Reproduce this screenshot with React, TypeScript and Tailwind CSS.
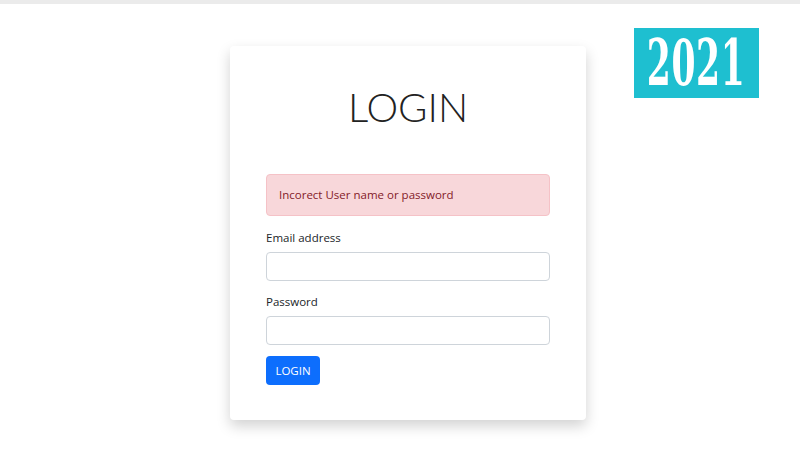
export default function App() {
  return (
    <div className="relative w-[800px] h-[450px] bg-white overflow-hidden" style={{ fontFamily: '"Open Sans", "Noto Sans", sans-serif' }}>
      <div className="h-[4px] bg-[#ebebeb]" />
      <div className="absolute left-[634px] top-[28px] w-[125px] h-[70px] bg-[#1ebfd0] flex items-center justify-center">
        <span className="text-white text-[64px] font-bold leading-none" style={{ fontFamily: '"DejaVu Serif Condensed", "DejaVu Serif", serif', transform: 'scaleX(0.6)', letterSpacing: '1px' }}>2021</span>
      </div>
      <div className="ml-[230px] mt-[42px] w-[356px] h-[374px] bg-white rounded-[4px] shadow-[0_6px_14px_rgba(0,0,0,0.18)] px-[36px] pt-[41px]">
        <h1 className="text-center text-[40px] leading-none text-[#222]" style={{ fontFamily: 'Lato, "Open Sans", sans-serif', fontWeight: 300 }}>LOGIN</h1>
        <div className="mt-[47px] h-[42px] rounded-[4px] bg-[#f8d7da] border border-[#f5c2c7] text-[#842029] text-[11.5px] flex items-center px-[12px]">Incorect User name or password</div>
        <div className="mt-[13px] text-[11.5px] text-[#212529] leading-[18px]">Email address</div>
        <div className="mt-[5px] h-[29px] rounded-[4px] border border-[#ced4da]" />
        <div className="mt-[12px] text-[11.5px] text-[#212529] leading-[18px]">Password</div>
        <div className="mt-[5px] h-[29px] rounded-[4px] border border-[#ced4da]" />
        <div className="mt-[11px] w-[54px] h-[29px] rounded-[4px] bg-[#0d6efd] text-white text-[11.5px] flex items-center justify-center">LOGIN</div>
      </div>
    </div>
  );
}
